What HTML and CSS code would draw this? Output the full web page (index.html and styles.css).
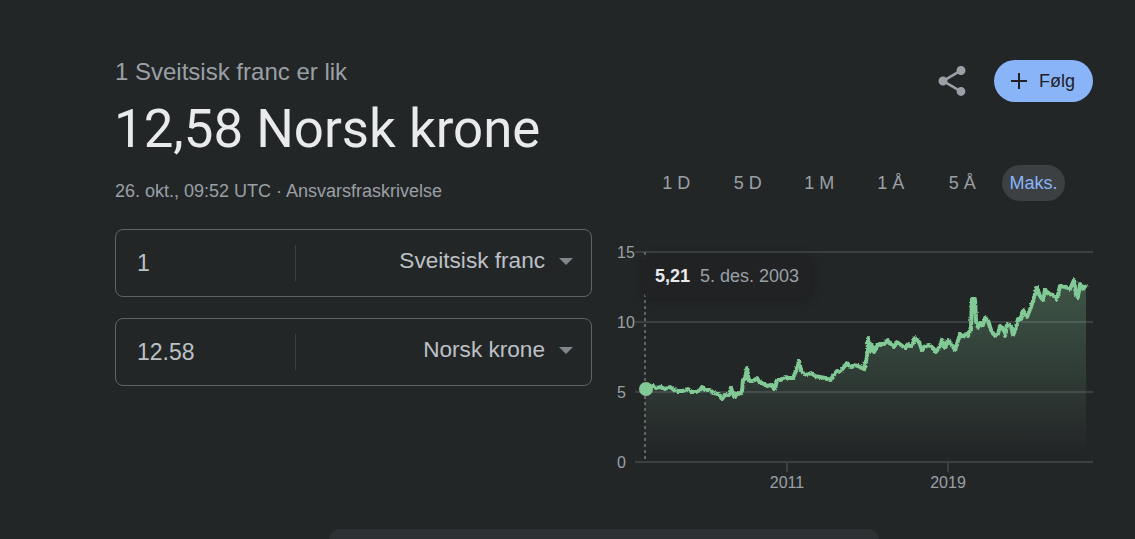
FILE: index.html
```html
<!DOCTYPE html>
<html lang="en">
<head>
    <meta charset="UTF-8">
    <title>Sveitsisk franc til Norsk krone</title>
    <link rel="stylesheet" href="styles.css">
</head>
<body>
    <div class="page">
        <div class="columns">
            <div class="left">
                <div class="subtitle">1 Sveitsisk franc er lik</div>
                <h1 class="result">12,58 Norsk krone</h1>
                <div class="meta">26. okt., 09:52 UTC · Ansvarsfraskrivelse</div>

                <div class="converter">
                    <span class="amount">1</span>
                    <span class="divider"></span>
                    <span class="currency">Sveitsisk franc</span>
                    <span class="caret"></span>
                </div>
                <div class="converter">
                    <span class="amount">12.58</span>
                    <span class="divider"></span>
                    <span class="currency">Norsk krone</span>
                    <span class="caret"></span>
                </div>
            </div>

            <div class="right">
                <div class="actions">
                    <svg class="share" viewBox="0 0 24 24"><path d="M18 16.08c-.76 0-1.44.3-1.96.77L8.91 12.7c.05-.23.09-.46.09-.7s-.04-.47-.09-.7l7.05-4.11c.54.5 1.25.81 2.04.81 1.66 0 3-1.34 3-3s-1.34-3-3-3-3 1.34-3 3c0 .24.04.47.09.7L8.04 9.81C7.5 9.31 6.79 9 6 9c-1.66 0-3 1.34-3 3s1.34 3 3 3c.79 0 1.5-.31 2.04-.81l7.12 4.16c-.05.21-.08.43-.08.65 0 1.61 1.31 2.92 2.92 2.92 1.61 0 2.92-1.31 2.92-2.92s-1.31-2.92-2.92-2.92z"/></svg>
                    <button class="follow">
                        <svg class="plus" viewBox="0 0 16 16"><path d="M8 0v16M0 8h16"/></svg>
                        Følg
                    </button>
                </div>

                <div class="ranges">
                    <span class="range">1 D</span>
                    <span class="range">5 D</span>
                    <span class="range">1 M</span>
                    <span class="range">1 Å</span>
                    <span class="range">5 Å</span>
                    <span class="range active">Maks.</span>
                </div>

                <div class="chart">
                    <svg class="chart-svg" viewBox="615 240 478 250">
                        <defs>
                            <linearGradient id="area" x1="0" y1="285" x2="0" y2="452" gradientUnits="userSpaceOnUse">
                                <stop offset="0" stop-color="#81c995" stop-opacity="0.28"/>
                                <stop offset="1" stop-color="#81c995" stop-opacity="0"/>
                            </linearGradient>
                            <!-- makes the price line look like dense daily data -->
                            <filter id="rough" x="-5%" y="-20%" width="110%" height="140%">
                                <feTurbulence type="fractalNoise" baseFrequency="0.4" numOctaves="2" seed="4"/>
                                <feDisplacementMap in="SourceGraphic" scale="3" xChannelSelector="R" yChannelSelector="G"/>
                            </filter>
                        </defs>

                        <!-- grid -->
                        <path class="grid" d="M635 251H1093M635 321H1093M635 391H1093M635 461H1093M787 461V471M948 461V471"/>

                        <text class="axis" x="617" y="257">15</text>
                        <text class="axis" x="617" y="327">10</text>
                        <text class="axis" x="617" y="397">5</text>
                        <text class="axis" x="617" y="467">0</text>
                        <text class="axis middle" x="787" y="487">2011</text>
                        <text class="axis middle" x="948" y="487">2019</text>

                        <path class="area" d="M645 388L653 385 656 387 661 386 665 388 670 386 674 389 678 390 683 390 688 388 692 391 696 391 700 389 702 386 705 389 710 389 714 392 718 393 722 398 725 394 729 394 731 387 733 393 735 396 737 392 740 393 742 390 743 379 745 378 747 367 749 380 753 380 757 377 760 382 763 382 767 385 771 384 775 388 777 379 781 379 785 376 789 377 793 377 796 370 799 360 801 369 803 372 807 374 811 372 815 375 820 376 825 377 830 379 834 374 837 370 840 371 844 366 847 362 851 366 855 364 860 366 864 368 867 356 868 337 870 350 872 344 874 351 877 345 880 343 884 343 888 339 891 343 894 346 897 341 901 344 905 347 908 344 912 345 915 337 919 341 922 349 926 345 929 344 933 347 936 351 940 345 942 339 945 347 948 339 952 344 955 349 957 343 960 333 963 336 966 333 968 335 971 326 972 298 975 298 976 320 978 326 981 322 983 324 985 317 988 320 991 329 995 335 998 333 1000 325 1003 328 1005 335 1007 323 1011 325 1013 334 1015 330 1018 318 1021 318 1023 309 1027 316 1031 306 1035 293 1037 287 1040 295 1043 299 1045 289 1049 293 1053 294 1057 298 1060 285 1066 286 1070 288 1074 279 1076 294 1078 296 1080 283 1083 288 1086 284V461H645Z"/>
                        <polyline class="line" points="645,388 653,385 656,387 661,386 665,388 670,386 674,389 678,390 683,390 688,388 692,391 696,391 700,389 702,386 705,389 710,389 714,392 718,393 722,398 725,394 729,394 731,387 733,393 735,396 737,392 740,393 742,390 743,379 745,378 747,367 749,380 753,380 757,377 760,382 763,382 767,385 771,384 775,388 777,379 781,379 785,376 789,377 793,377 796,370 799,360 801,369 803,372 807,374 811,372 815,375 820,376 825,377 830,379 834,374 837,370 840,371 844,366 847,362 851,366 855,364 860,366 864,368 867,356 868,337 870,350 872,344 874,351 877,345 880,343 884,343 888,339 891,343 894,346 897,341 901,344 905,347 908,344 912,345 915,337 919,341 922,349 926,345 929,344 933,347 936,351 940,345 942,339 945,347 948,339 952,344 955,349 957,343 960,333 963,336 966,333 968,335 971,326 972,298 975,298 976,320 978,326 981,322 983,324 985,317 988,320 991,329 995,335 998,333 1000,325 1003,328 1005,335 1007,323 1011,325 1013,334 1015,330 1018,318 1021,318 1023,309 1027,316 1031,306 1035,293 1037,287 1040,295 1043,299 1045,289 1049,293 1053,294 1057,298 1060,285 1066,286 1070,288 1074,279 1076,294 1078,296 1080,283 1083,288 1086,284"/>

                        <path class="hover-line" d="M645 251V461"/>
                        <circle class="dot" cx="646" cy="388" r="7"/>
                    </svg>
                    <div class="tooltip"><b>5,21</b><span>5. des. 2003</span></div>
                </div>
            </div>
        </div>

        <div class="more"></div>
    </div>
</body>
</html>
```

FILE: styles.css
```css
html, body {
    height: 100%;
}
body {
    margin: 0;
    overflow: hidden;
    background-color: #232627;
    font-family: "Liberation Sans", Arial, sans-serif;
    color: #9aa0a6;
}

.page {
    padding: 60px 42px 0 115px;
}
.columns {
    display: flex;
    gap: 23px;
    height: 469px;
}
.left {
    width: 477px;
}
.right {
    width: 478px;
}

/* Heading */
.subtitle {
    font-size: 24px;
    line-height: 24px;
}
.result {
    margin: 15px 0 0 -1px;
    font-family: Roboto, "Liberation Sans", sans-serif;
    font-size: 52.8px;
    font-weight: 400;
    line-height: 60px;
    color: #e8eaed;
}
.meta {
    margin-top: 22px;
    font-size: 18px;
    line-height: 20px;
}

/* Converter */
.converter {
    display: flex;
    align-items: center;
    box-sizing: border-box;
    height: 68px;
    margin-top: 21px;
    border: 1px solid #5f6368;
    border-radius: 8px;
    color: #bdc1c6;
}
.meta + .converter {
    margin-top: 28px;
}
.amount {
    width: 158px;
    padding: 1px 0 0 21px;
    font-size: 23px;
}
.divider {
    width: 1px;
    height: 36px;
    background-color: #3c4043;
}
.currency {
    flex: 1;
    margin-top: -5px;
    text-align: right;
    font-size: 22.6px;
}
.caret {
    width: 0;
    height: 0;
    margin: -3px 18px 0 14px;
    border-top: 7px solid #80868b;
    border-left: 7.5px solid transparent;
    border-right: 7.5px solid transparent;
}

/* Share and follow */
.actions {
    display: flex;
    justify-content: flex-end;
    align-items: center;
    height: 42px;
}
.share {
    width: 36px;
    height: 36px;
    margin-right: 24px;
    fill: #9aa0a6;
}
.follow {
    display: flex;
    align-items: center;
    gap: 12px;
    box-sizing: border-box;
    width: 99px;
    height: 42px;
    padding: 0 0 0 17px;
    border: none;
    border-radius: 21px;
    background-color: #8ab4f8;
    color: #202124;
    font-family: inherit;
    font-size: 18px;
}
.plus {
    width: 16px;
    height: 16px;
    stroke: #202124;
    stroke-width: 2;
}

/* Range tabs */
.ranges {
    display: flex;
    justify-content: flex-end;
    align-items: center;
    margin: 63px 28px 0 0;
}
.range {
    width: 71.5px;
    font-size: 18px;
    line-height: 36px;
    text-align: center;
}
.range.active {
    width: 63px;
    margin-left: 4px;
    border-radius: 18px;
    background-color: #3c4043;
    color: #8ab4f8;
}

/* Chart */
.chart {
    position: relative;
    margin-top: 40px;
}
.chart-svg {
    display: block;
    width: 478px;
    height: 250px;
}
.grid {
    fill: none;
    stroke: #3c4043;
    stroke-width: 2;
}
.axis {
    fill: #9aa0a6;
    font-size: 16px;
}
.axis.middle {
    text-anchor: middle;
}
.area {
    fill: url(#area);
}
.line {
    fill: none;
    stroke: #81c995;
    stroke-width: 4;
    stroke-linejoin: round;
    filter: url(#rough);
}
.hover-line {
    fill: none;
    stroke: #9aa0a6;
    stroke-dasharray: 3 3;
}
.dot {
    fill: #81c995;
}
.tooltip {
    position: absolute;
    top: 14px;
    left: 28px;
    display: flex;
    align-items: center;
    gap: 10px;
    height: 43px;
    padding: 0 12px;
    border-radius: 8px;
    background-color: #202224;
    box-shadow: 0 1px 12px rgba(0, 0, 0, 0.25);
    font-size: 18px;
    white-space: nowrap;
}
.tooltip b {
    color: #e8eaed;
}

/* Bottom of the next card */
.more {
    width: 550px;
    height: 10px;
    margin: 0 auto;
    border-radius: 24px 24px 0 0;
    background-color: #2e3133;
}
```
